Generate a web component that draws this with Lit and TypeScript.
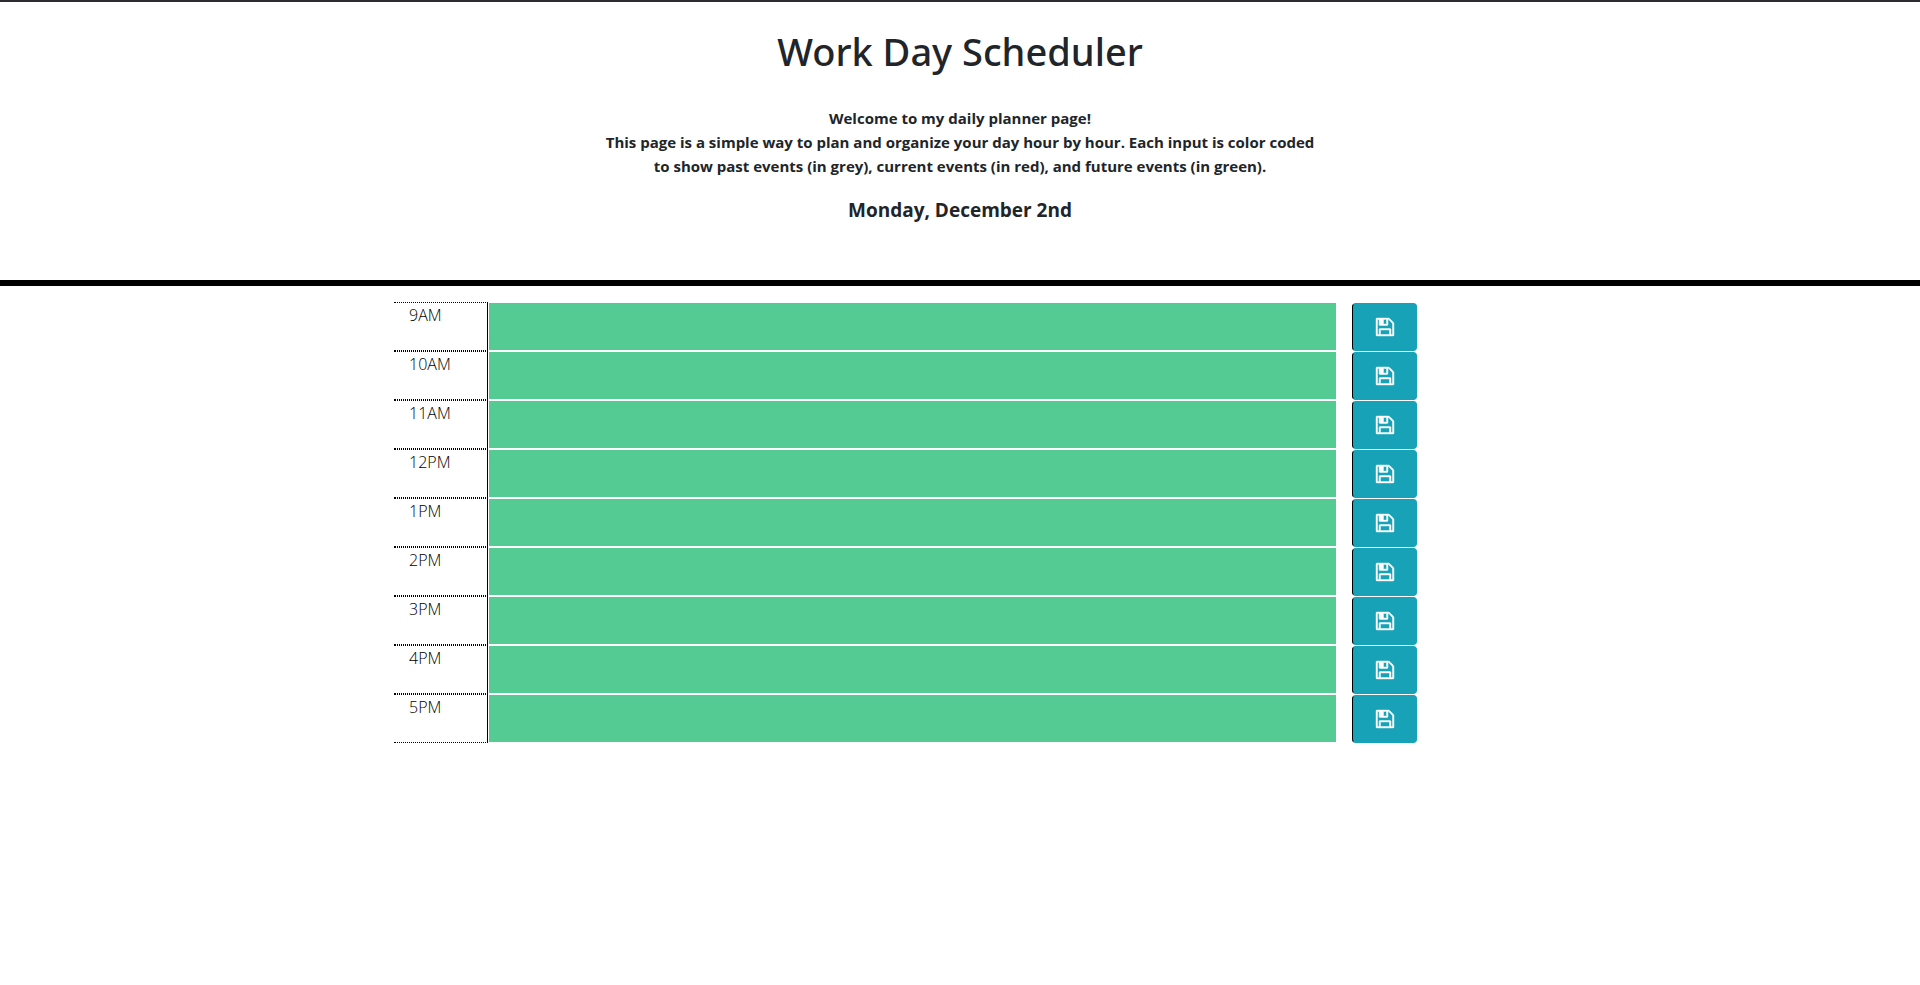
import { LitElement, html, css } from "lit";
import { customElement, state } from "lit/decorators.js";

const HOURS = ["9AM", "10AM", "11AM", "12PM", "1PM", "2PM", "3PM", "4PM", "5PM"];

@customElement("app-root")
export class AppRoot extends LitElement {
  @state() private notes: Record<string, string> = {};

  static styles = css`
    :host {
      display: block;
      background: #fff;
      color: #212529;
      font-family: "Segoe UI", "Open Sans", "Noto Sans", sans-serif;
      font-size: 16px;
      line-height: 24px;
    }
    * {
      box-sizing: border-box;
    }
    .header {
      display: flex;
      flex-direction: column;
      align-items: center;
      padding: 25px 16px 55px;
      border-top: 2px solid #2b2c2f;
      border-bottom: 6px solid #000;
      text-align: center;
    }
    .title {
      margin: 0 0 31px;
      font-family: "Segoe UI", "Noto Sans", sans-serif;
      font-size: 38px;
      font-weight: 500;
      line-height: 48px;
    }
    .intro {
      margin: 0 0 17px;
      font-size: 15px;
      font-weight: 700;
    }
    .intro span {
      display: block;
    }
    .day {
      margin: 0;
      font-size: 19px;
      font-weight: 700;
      line-height: 30px;
    }
    .planner {
      width: 100%;
      max-width: 1140px;
      margin: 0 auto;
      padding: 16px 4px;
    }
    .block {
      display: grid;
      grid-template-columns: 94px minmax(0, 848px) 65px;
      height: 49px;
    }
    .hour {
      padding: 0 15px;
      border: 1px dotted #000;
      border-left: 0;
      border-right: 1px solid #000;
      color: #000;
      font-weight: 300;
    }
    .note-cell {
      padding: 1px 0 1px 1px;
    }
    .note {
      display: block;
      width: 100%;
      height: 47px;
      padding: 4px 8px;
      border: 0;
      background: #54cb93;
      color: #fff;
      font: inherit;
      resize: none;
    }
    .save {
      display: flex;
      align-items: center;
      justify-content: center;
      width: 65px;
      height: 48px;
      margin: 1px 0 0 16px;
      padding: 0;
      border: 1px solid #17a2b8;
      border-left-color: #000;
      border-radius: 4px;
      background: #17a2b8;
      color: #fff;
      cursor: pointer;
    }
    .icon {
      width: 18px;
      height: 18px;
      overflow: visible;
      fill: currentColor;
      stroke: currentColor;
      stroke-width: 36;
    }
  `;

  private save(hour: string) {
    const field = this.renderRoot.querySelector<HTMLTextAreaElement>(`#note-${hour}`);
    this.notes = { ...this.notes, [hour]: field?.value ?? "" };
  }

  render() {
    return html`
      <header class="header">
        <h1 class="title">Work Day Scheduler</h1>
        <p class="intro">
          <span>Welcome to my daily planner page!</span>
          <span>This page is a simple way to plan and organize your day hour by hour. Each input is color coded</span>
          <span>to show past events (in grey), current events (in red), and future events (in green).</span>
        </p>
        <p class="day">Monday, December 2nd</p>
      </header>
      <main class="planner">
        ${HOURS.map(
          (hour) => html`
            <div class="block">
              <label class="hour" for="note-${hour}">${hour}</label>
              <div class="note-cell">
                <textarea class="note" id="note-${hour}" .value=${this.notes[hour] ?? ""}></textarea>
              </div>
              <button class="save" type="button" aria-label="Save ${hour}" @click=${() => this.save(hour)}>
                <svg class="icon" viewBox="0 128 1536 1536" aria-hidden="true">
                  <path
                    d="M384 1536h768v-384h-768v384zm896 0h128v-896q0-14-10-38.5t-20-34.5l-281-281q-10-10-34-20t-39-10v416q0 40-28 68t-68 28h-576q-40 0-68-28t-28-68v-416h-128v1280h128v-416q0-40 28-68t68-28h832q40 0 68 28t28 68v416zm-384-928v-320q0-13-9.5-22.5t-22.5-9.5h-192q-13 0-22.5 9.5t-9.5 22.5v320q0 13 9.5 22.5t22.5 9.5h192q13 0 22.5-9.5t9.5-22.5zm640 32v928q0 40-28 68t-68 28h-1344q-40 0-68-28t-28-68v-1344q0-40 28-68t68-28h928q40 0 88 20t76 48l280 280q28 28 48 76t20 88z"
                  />
                </svg>
              </button>
            </div>
          `
        )}
      </main>
    `;
  }
}
